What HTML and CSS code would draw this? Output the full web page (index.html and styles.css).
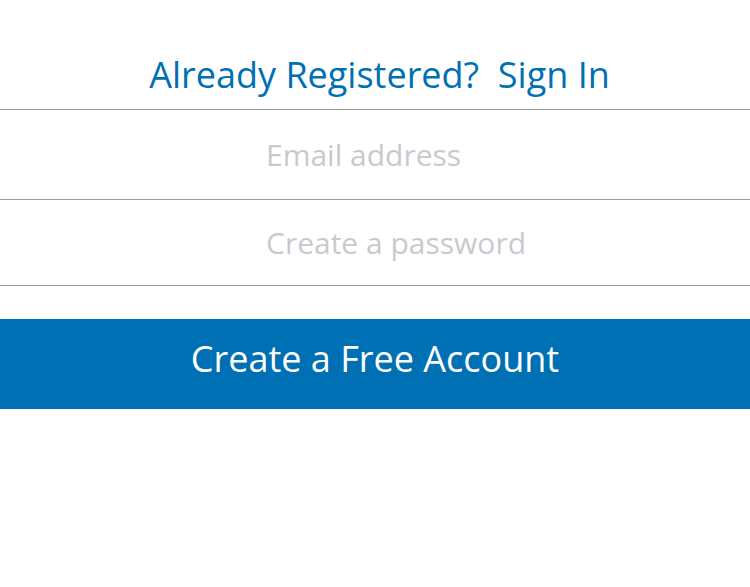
FILE: index.html
```html
<!DOCTYPE html>
<html lang="en">
<head>
    <meta charset="UTF-8">
    <meta name="viewport" content="width=device-width, initial-scale=1.0">
    <title>Sign Up</title>
    <link rel="stylesheet" href="styles.css">
</head>
<body>
    <div class="signup">
        <h1 class="signin-link"><a href="#">Already Registered?&nbsp; Sign In</a></h1>
        <form class="signup-form">
            <input class="field field-email" type="email" placeholder="Email address">
            <input class="field field-password" type="password" placeholder="Create a password">
            <button class="button" type="submit">Create a Free Account</button>
        </form>
    </div>
</body>
</html>
```

FILE: styles.css
```css
/* General Styles */
* {
    margin: 0;
    padding: 0;
    box-sizing: border-box;
}

body {
    font-family: "Open Sans", Arial, sans-serif;
    background-color: #fff;
}

/* Heading */
.signin-link {
    height: 110px;
    padding-top: 51px;
    padding-left: 9px;
    text-align: center;
    font-size: 36px;
    font-weight: normal;
    line-height: 48px;
    border-bottom: 1px solid #999;
}

.signin-link a {
    color: #0070b4;
    text-decoration: none;
}

/* Form fields */
.field {
    display: block;
    width: 100%;
    border: none;
    border-bottom: 1px solid #999;
    padding-left: 266px;
    font-family: "Open Sans", Arial, sans-serif;
    font-size: 30px;
    color: #333;
    outline: none;
}

.field::placeholder {
    color: #c9c9ce;
}

.field-email {
    height: 90px;
}

.field-password {
    height: 86px;
}

/* Button */
.button {
    display: block;
    width: 100%;
    height: 90px;
    margin-top: 33px;
    padding-bottom: 12px;
    border: none;
    background-color: #0070b4;
    color: #fff;
    font-family: "Open Sans", Arial, sans-serif;
    font-size: 36px;
    cursor: pointer;
}
```
